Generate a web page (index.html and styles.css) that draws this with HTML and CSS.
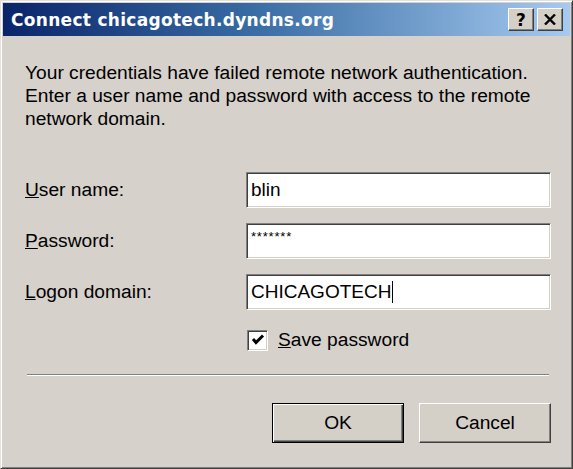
FILE: index.html
```html
<!DOCTYPE html>
<html lang="en">
<head>
  <meta charset="UTF-8" />
  <meta name="viewport" content="width=device-width, initial-scale=1.0" />
  <title>Connect chicagotech.dyndns.org</title>
  <link rel="stylesheet" href="styles.css">
</head>
<body>
  <div class="window">
    <div class="titlebar">
      <span class="title">Connect chicagotech.dyndns.org</span>
      <div class="caption-buttons">
        <button class="cap-btn">?</button>
        <button class="cap-btn close">
          <svg width="12" height="11" viewBox="0 0 12 11"><path d="M1 0.5 L11 10.5 M11 0.5 L1 10.5" stroke="#000" stroke-width="2.4"/></svg>
        </button>
      </div>
    </div>

    <div class="content">
      <p class="intro">Your credentials have failed remote network authentication.<br>Enter a user name and password with access to the remote<br>network domain.</p>

      <div class="form">
        <label class="label"><u>U</u>ser name:</label>
        <div class="field"><span class="value">blin</span></div>

        <label class="label"><u>P</u>assword:</label>
        <div class="field"><span class="value stars">*******</span></div>

        <label class="label"><u>L</u>ogon domain:</label>
        <div class="field"><span class="value">CHICAGOTECH</span><span class="caret"></span></div>
      </div>

      <div class="save-row">
        <span class="checkbox">
          <svg width="14" height="14" viewBox="0 0 14 14"><path d="M2 6 L5 9.5 L12 2.5" fill="none" stroke="#000" stroke-width="3"/></svg>
        </span>
        <span class="save-label"><u>S</u>ave password</span>
      </div>

      <div class="separator"></div>

      <div class="actions">
        <button class="btn default">OK</button>
        <button class="btn">Cancel</button>
      </div>
    </div>
  </div>
</body>
</html>
```

FILE: styles.css
```css
body {
  margin: 0;
  background: #ffffff;
  font-family: 'Liberation Sans', Arial, sans-serif;
}
.window {
  width: 573px;
  height: 469px;
  box-sizing: border-box;
  background: #d6d1cb;
  border-top: 1px solid #e4e0da;
  border-left: 1px solid #e4e0da;
  border-right: 1px solid #404040;
  border-bottom: 1px solid #404040;
  box-shadow: inset 1px 1px #ffffff, inset -1px -1px #808080;
  padding: 2px 2px;
}
.titlebar {
  height: 33px;
  display: flex;
  align-items: center;
  justify-content: space-between;
  padding: 0 7px 0 8px;
  background: linear-gradient(to right, #0a246a 0%, #3a6ea5 45%, #a6caf0 100%);
}
.title {
  color: #ffffff;
  font-family: 'DejaVu Sans', Verdana, sans-serif;
  font-weight: bold;
  font-size: 17px;
  letter-spacing: 0.3px;
}
.caption-buttons {
  display: flex;
  gap: 3px;
}
.cap-btn {
  width: 26px;
  height: 23px;
  padding: 0;
  display: flex;
  align-items: center;
  justify-content: center;
  background: #d4d0c8;
  border-top: 1px solid #ffffff;
  border-left: 1px solid #ffffff;
  border-right: 1px solid #404040;
  border-bottom: 1px solid #404040;
  box-shadow: inset -1px -1px #808080;
  font-family: 'DejaVu Sans', sans-serif;
  font-weight: bold;
  font-size: 17px;
  line-height: 20px;
  color: #000;
}
.content {
  padding: 25px 19px 0 22px;
}
.intro {
  margin: 0;
  font-size: 19.2px;
  line-height: 23px;
  color: #000;
}
.form {
  margin-top: 42px;
  display: grid;
  grid-template-columns: 221px 305px;
  grid-auto-rows: 36px;
  row-gap: 15px;
  align-items: center;
}
.label {
  font-size: 19.2px;
  color: #000;
}
.field {
  height: 36px;
  box-sizing: border-box;
  background: #ffffff;
  border-top: 1px solid #808080;
  border-left: 1px solid #808080;
  border-right: 1px solid #ffffff;
  border-bottom: 1px solid #ffffff;
  box-shadow: inset 1px 1px #404040, inset -1px -1px #d4d0c8;
  padding: 0 4px;
  display: flex;
  align-items: center;
  font-size: 19px;
}
.value.stars {
  font-size: 13px;
  align-self: flex-start;
  margin-top: 5px;
  letter-spacing: 0.8px;
}
.caret {
  width: 1px;
  height: 22px;
  background: #000;
  margin-left: 1px;
}
.save-row {
  margin-top: 20px;
  margin-left: 222px;
  display: flex;
  align-items: center;
  gap: 10px;
  height: 20px;
}
.checkbox {
  width: 21px;
  height: 21px;
  box-sizing: border-box;
  background: #ffffff;
  border-top: 1px solid #808080;
  border-left: 1px solid #808080;
  border-right: 1px solid #ffffff;
  border-bottom: 1px solid #ffffff;
  box-shadow: inset 1px 1px #404040, inset -1px -1px #d4d0c8;
  display: flex;
  align-items: center;
  justify-content: center;
}
.save-label {
  font-size: 19.2px;
}
.separator {
  margin: 24px 2px 0 2px;
  height: 1px;
  background: #808080;
  border-bottom: 1px solid #ffffff;
}
.actions {
  margin-top: 27px;
  display: flex;
  justify-content: flex-end;
  gap: 15px;
}
.btn {
  width: 132px;
  height: 40px;
  box-sizing: border-box;
  background: #d4d0c8;
  border-top: 1px solid #ffffff;
  border-left: 1px solid #ffffff;
  border-right: 1px solid #404040;
  border-bottom: 1px solid #404040;
  box-shadow: inset -1px -1px #808080;
  font-family: 'Liberation Sans', Arial, sans-serif;
  font-size: 19.2px;
  color: #000;
  padding: 0;
}
.btn.default {
  border: 1px solid #000;
  box-shadow: inset 1px 1px #ffffff, inset -1px -1px #404040, inset -2px -2px #808080;
}
```
